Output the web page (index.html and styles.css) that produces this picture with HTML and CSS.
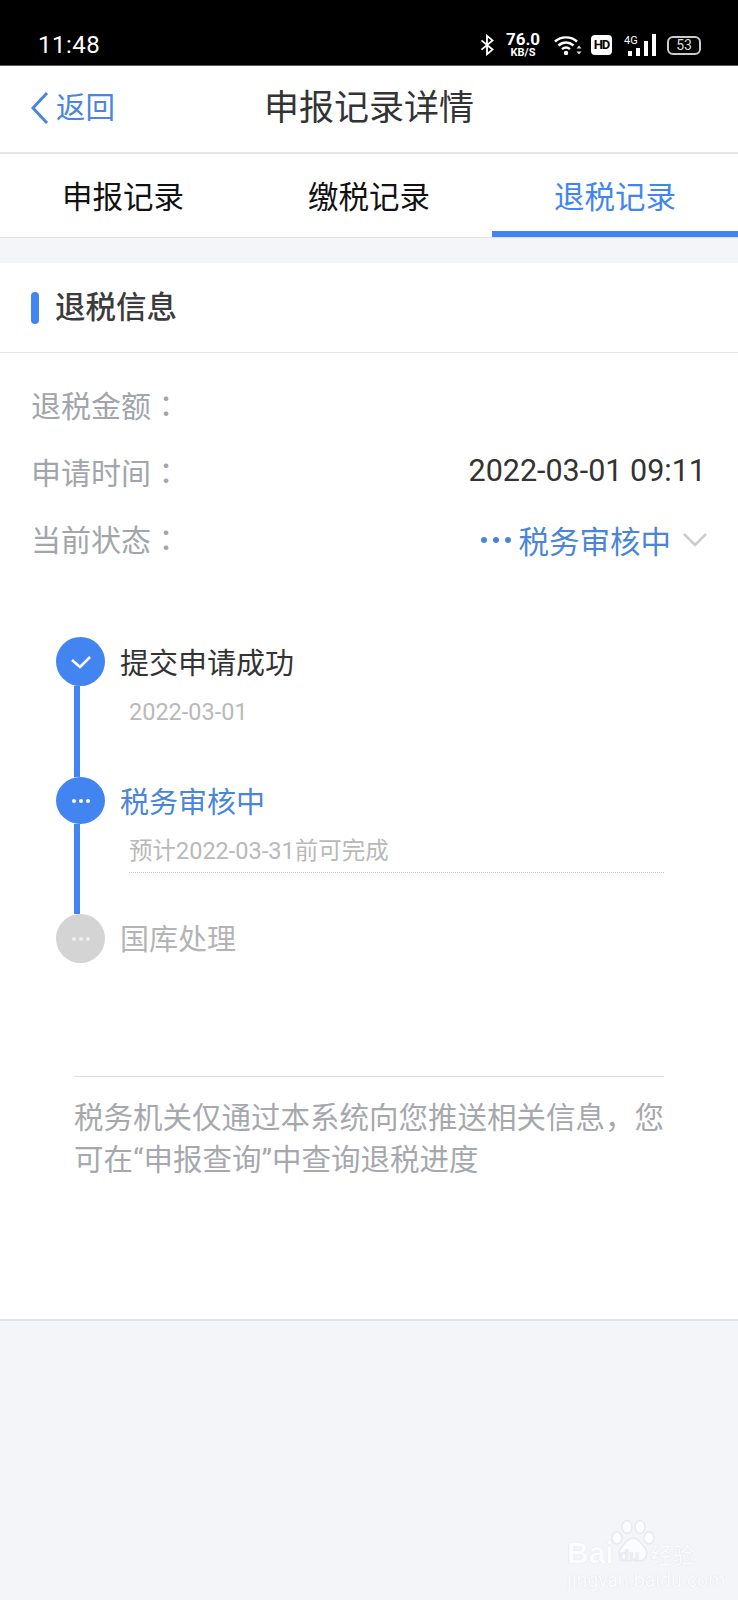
FILE: index.html
```html
<!DOCTYPE html>
<html lang="zh-CN">

<head>
    <meta charset="UTF-8">
    <meta name="viewport" content="width=device-width, initial-scale=1.0">
    <title>申报记录详情</title>
    <link rel="stylesheet" href="styles.css">
</head>

<body>
    <div class="status-bar">
        <span class="clock">11:48</span>
        <div class="status-icons">
            <svg class="ic-bt" width="16" height="22" viewBox="0 0 16 24">
                <path d="M2 7l12 10-6 5V2l6 5L2 17" fill="none" stroke="#fff" stroke-width="2" />
            </svg>
            <div class="speed"><b>76.0</b><small>KB/S</small></div>
            <svg class="ic-wifi" width="28" height="20" viewBox="0 0 28 20">
                <path d="M1 6.500C7 1 17 1 23 6.500M4.500 10.500C9 6.500 15 6.500 19.500 10.500M8 14.200C10.500 12 13.500 12 16 14.200" fill="none" stroke="#fff" stroke-width="2.400" />
                <circle cx="12" cy="18" r="2.200" fill="#fff" />
                <path d="M25 10.500l2.500 3h-5zM25 19.500l2.500-3h-5z" fill="#ddd" />
            </svg>
            <span class="hd">HD</span>
            <div class="signal">
                <span class="net">4G</span>
                <i class="s1"></i><i class="s2"></i><i class="s3"></i><i class="s4"></i>
            </div>
            <span class="battery">53</span>
        </div>
    </div>

    <div class="nav">
        <div class="back">
            <svg width="20" height="34" viewBox="0 0 20 34">
                <path d="M17 2L3 17l14 15" fill="none" stroke="#4a86e0" stroke-width="3" />
            </svg>
            <span>返回</span>
        </div>
        <div class="nav-title">申报记录详情</div>
    </div>

    <div class="tabs">
        <div class="tab">申报记录</div>
        <div class="tab">缴税记录</div>
        <div class="tab active">退税记录</div>
    </div>

    <div class="card">
        <div class="card-head">
            <span class="mark"></span>
            <span>退税信息</span>
        </div>

        <div class="info">
            <div class="row"><span class="label">退税金额<span class="colon" lang="zh-TW">：</span></span></div>
            <div class="row"><span class="label">申请时间<span class="colon" lang="zh-TW">：</span></span><span class="value">2022-03-01 09:11</span></div>
            <div class="row">
                <span class="label">当前状态<span class="colon" lang="zh-TW">：</span></span>
                <span class="state">
                    <span class="state-dots"><i></i><i></i><i></i></span>
                    税务审核中
                    <svg width="26" height="16" viewBox="0 0 26 16">
                        <path d="M2 2l11 11L24 2" fill="none" stroke="#ccc" stroke-width="2.500" />
                    </svg>
                </span>
            </div>
        </div>

        <div class="timeline">
            <div class="step step-one">
                <div class="rail">
                    <span class="node">
                        <svg width="22" height="16" viewBox="0 0 22 16">
                            <path d="M2 6l8 7L20 3" fill="none" stroke="#fff" stroke-width="2.500" />
                        </svg>
                    </span>
                    <span class="line"></span>
                </div>
                <div class="step-body">
                    <div class="step-title">提交申请成功</div>
                    <div class="step-note">2022-03-01</div>
                </div>
            </div>
            <div class="step step-two">
                <div class="rail">
                    <span class="node small"><span class="dots"><i></i><i></i><i></i></span></span>
                    <span class="line"></span>
                </div>
                <div class="step-body">
                    <div class="step-title blue">税务审核中</div>
                    <div class="step-note dotted">预计2022-03-31前可完成</div>
                </div>
            </div>
            <div class="step">
                <div class="rail">
                    <span class="node off"><span class="dots"><i></i><i></i><i></i></span></span>
                </div>
                <div class="step-body">
                    <div class="step-title grey">国库处理</div>
                </div>
            </div>
        </div>

        <div class="footnote">税务机关仅通过本系统向您推送相关信息，您可在“申报查询”中查询退税进度</div>
    </div>

    <div class="watermark">
        <svg class="wm-paw" width="44" height="46" viewBox="0 0 44 46">
            <g fill="#fbfcfd" stroke="#e8eaee" stroke-width="1.500">
                <ellipse cx="6" cy="18" rx="5" ry="6" />
                <ellipse cx="16" cy="7" rx="5" ry="6.500" />
                <ellipse cx="29" cy="7" rx="5" ry="6.500" />
                <ellipse cx="38" cy="18" rx="5" ry="6" />
                <path d="M22 18c6 0 8 6 12 10 4 5 1 13-6 13-3 0-4-1-6-1s-3 1-6 1c-7 0-10-8-6-13 4-4 6-10 12-10z" />
            </g>
        </svg>
        <div class="wm-logo"><span>Bai</span><span class="wm-du">du</span><span class="wm-cn">经验</span></div>
        <div class="wm-url">jingyan.baidu.com</div>
    </div>
</body>

</html>
```

FILE: styles.css
```css
* {
    box-sizing: border-box;
}

html,
body {
    margin: 0;
    height: 1600px;
    overflow: hidden;
}

body {
    position: relative;
    font-family: Roboto, "Noto Sans CJK SC", sans-serif;
    background-color: #f3f5f9;
    color: #333;
}

/* status bar */
.status-bar {
    height: 66px;
    background-color: #000;
    border-bottom: 1px solid #555;
    color: #fff;
    display: flex;
    justify-content: space-between;
    align-items: flex-end;
    padding: 0 37px 3px 38px;
}

.clock {
    font-size: 24px;
    line-height: 34px;
    letter-spacing: 0.5px;
}

.status-icons {
    display: flex;
    align-items: center;
    height: 34px;
}

.ic-bt {
    margin-right: 11px;
}

.speed {
    display: flex;
    flex-direction: column;
    align-items: center;
    width: 34px;
    margin-right: 14px;
}

.speed b {
    font-size: 17px;
    line-height: 15px;
}

.speed small {
    font-size: 11px;
    line-height: 11px;
    font-weight: 700;
}

.ic-wifi {
    margin-right: 9px;
}

.hd {
    width: 21px;
    height: 20px;
    border-radius: 4px;
    background-color: #fff;
    color: #000;
    font-size: 13px;
    font-weight: 700;
    line-height: 20px;
    text-align: center;
    margin-right: 12px;
    letter-spacing: -1px;
}

.signal {
    position: relative;
    display: flex;
    align-items: flex-end;
    gap: 4px;
    height: 22px;
    width: 32px;
    padding-left: 4px;
    margin-right: 11px;
}

.signal i {
    width: 4px;
    background-color: #fff;
}

.signal .s1 {
    height: 5px;
}

.signal .s2 {
    height: 8px;
}

.signal .s3 {
    height: 15px;
}

.signal .s4 {
    height: 22px;
}

.net {
    position: absolute;
    left: 0;
    top: 1px;
    font-size: 11px;
    line-height: 12px;
}

.battery {
    width: 34px;
    height: 19px;
    border: 2px solid #ccc;
    border-radius: 6px;
    font-size: 14px;
    line-height: 15px;
    text-align: center;
    color: #ddd;
}

/* nav */
.nav {
    position: relative;
    height: 88px;
    background-color: #fff;
    border-bottom: 2px solid #e6e6e6;
    display: flex;
    align-items: center;
    justify-content: center;
}

.back {
    position: absolute;
    left: 30px;
    top: 25px;
    display: flex;
    align-items: center;
    gap: 6px;
    color: #4a86e0;
    font-size: 29.500px;
    line-height: 34px;
}

.nav-title {
    font-size: 35px;
    color: #333;
    line-height: 44px;
}

/* tabs */
.tabs {
    height: 84px;
    background-color: #fff;
    border-bottom: 1px solid #e2e2e2;
    display: flex;
}

.tab {
    flex: 1;
    text-align: center;
    font-size: 30.500px;
    line-height: 88px;
    color: #111;
}

.tab.active {
    color: #4285f0;
    border-bottom: 6px solid #4285f0;
}

/* card */
.card {
    margin-top: 25px;
    height: 1058px;
    background-color: #fff;
    border-bottom: 2px solid #e2e3e6;
}

.card-head {
    height: 90px;
    border-bottom: 1px solid #e4e4e4;
    display: flex;
    align-items: center;
    gap: 16px;
    padding-left: 31px;
    font-size: 30.500px;
    font-weight: 500;
    color: #3c3c3c;
}

.card-head span:last-child {
    margin-top: -5px;
}

.mark {
    width: 8px;
    height: 32px;
    border-radius: 4px;
    background-color: #4285f0;
}

.info {
    padding: 17px 32px 0 31px;
}

.row {
    height: 67px;
    display: flex;
    justify-content: space-between;
    align-items: center;
    font-size: 30px;
}

.label {
    color: #a2a5ab;
}

/* colon sits centred in its box in the TC cut */
.colon {
    font-family: "Noto Sans CJK TC", sans-serif;
}

.value {
    color: #333;
    font-size: 30.500px;
}

.state {
    display: flex;
    align-items: center;
    color: #4a86d8;
    font-size: 30.500px;
    margin-top: 4px;
    margin-right: -2px;
}

.state svg {
    margin-left: 11px;
}

.state-dots {
    display: flex;
    gap: 6px;
    margin-right: 8px;
}

.state-dots i {
    width: 6px;
    height: 6px;
    border-radius: 50%;
    background-color: #4a86d8;
}

/* timeline */
.timeline {
    margin-top: 66px;
    padding-left: 56px;
}

.step {
    display: flex;
}

.step-one {
    height: 140px;
}

.step-two {
    height: 137px;
}

.rail {
    width: 49px;
    display: flex;
    flex-direction: column;
    align-items: flex-start;
}

.node {
    flex: none;
    width: 49px;
    height: 49px;
    border-radius: 50%;
    background-color: #4285f0;
    display: flex;
    align-items: center;
    justify-content: center;
}

.node.small {
    height: 47px;
}

.node.off {
    background-color: #d4d4d4;
}

.line {
    flex: 1;
    width: 6px;
    margin-left: 18px;
    background-color: #4285f0;
}

.dots {
    display: flex;
    gap: 3px;
}

.dots i {
    width: 4px;
    height: 4px;
    border-radius: 50%;
    background-color: #fff;
}

.node.off .dots i {
    background-color: #eee;
}

.step-body {
    flex: 1;
    padding-left: 15px;
}

.step-title {
    font-size: 29px;
    line-height: 44px;
    color: #333;
    margin-top: 5px;
}

.step-title.blue {
    color: #4a86d8;
    margin-top: 4px;
}

.step-title.grey {
    color: #b4b4b4;
    margin-top: 4px;
}

.step-note {
    margin: 8px 0 0 9px;
    width: 535px;
    font-size: 23.500px;
    line-height: 36px;
    color: #b9b9b9;
}

.step-note.dotted {
    border-bottom: 1px dotted #ccc;
    padding-bottom: 3px;
    margin-top: 8px;
}

/* footnote */
.footnote {
    margin: 113px 0 0 74px;
    width: 590px;
    padding-top: 20px;
    border-top: 1px solid #dfdfdf;
    font-size: 29.500px;
    line-height: 42px;
    color: #a6a8ad;
}

/* watermark sits over the page background */
.watermark {
    position: absolute;
    left: 567px;
    top: 1533px;
    color: #fbfcfd;
}

.wm-paw {
    position: absolute;
    left: 44px;
    top: -13px;
}

.wm-logo {
    position: relative;
    font-family: "Liberation Sans", sans-serif;
    font-size: 30px;
    font-weight: 700;
    line-height: 34px;
    display: flex;
    align-items: center;
    text-shadow: 0 0 1px #d4d6da;
}

.wm-du {
    font-size: 17px;
    color: #eceef2;
    margin: 6px 11px 0 5px;
}

.wm-cn {
    font-family: "Noto Sans CJK SC", sans-serif;
    font-size: 22px;
    font-weight: 400;
}

.wm-url {
    position: relative;
    margin-top: -3px;
    font-size: 19.500px;
    line-height: 22px;
    text-shadow: 0 0 1px #d4d6da;
}
```
